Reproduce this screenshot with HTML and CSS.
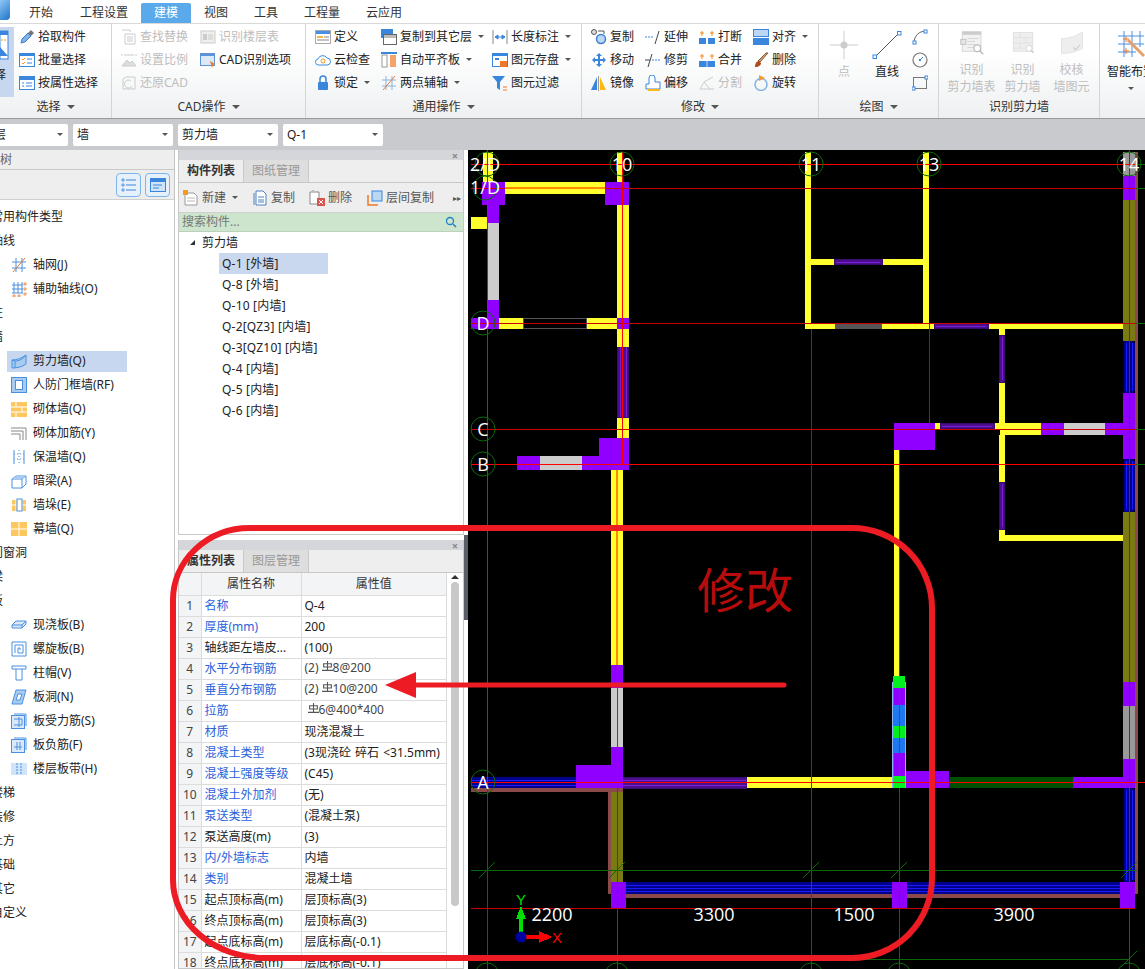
FILE: index.html
```html
<!DOCTYPE html>
<html lang="zh">
<head>
<meta charset="utf-8">
<title>建模</title>
<link rel="stylesheet" href="styles.css">
</head>
<body>
<svg class="defs" width="0" height="0">
  <defs>
    <symbol id="i-sel" viewBox="0 0 14 34"><rect x="0" y="1" width="8" height="28" fill="#fff" stroke="#3a86dc"/><rect x="0" y="1" width="8" height="4" fill="#3a86dc"/><path d="M1 10h6" stroke="#f59a23" stroke-dasharray="2 1"/><path d="M0 17l8 9H0z" fill="#3a86dc"/></symbol>
    <symbol id="i-pick" viewBox="0 0 16 16"><path d="M2 14l1-4 6-6 3 3-6 6z" fill="#7fb2e8" stroke="#3a7fd0"/><path d="M9 4l3-3 3 3-3 3z" fill="#777"/></symbol>
    <symbol id="i-batch" viewBox="0 0 16 16"><rect x=".5" y="1.500" width="15" height="13" fill="#fff" stroke="#3a86dc"/><rect y="1" width="16" height="3" fill="#3a86dc"/><path d="M3 7l1 1 2-2M3 11l1 1 2-2" stroke="#f59a23" fill="none"/><path d="M8 7h5M8 11h5" stroke="#3a86dc"/></symbol>
    <symbol id="i-attr" viewBox="0 0 16 16"><rect x=".5" y="1.500" width="15" height="13" fill="#fff" stroke="#3a86dc"/><rect y="1" width="16" height="4" fill="#3a86dc"/><path d="M3 8h2M3 11h2M7 8h6M7 11h6" stroke="#3a86dc"/></symbol>
    <symbol id="i-find" viewBox="0 0 16 16"><path d="M1 1h8v2M4 5h10v10H4z" fill="none" stroke="#ccc"/><path d="M6 8h6M6 10h6M6 12h6" stroke="#ccc"/></symbol>
    <symbol id="i-table" viewBox="0 0 16 16"><rect x="1" y="2" width="14" height="12" fill="#eee" stroke="#ccc"/><rect x="3" y="5" width="4" height="6" fill="#ccc"/><path d="M8 6h5M8 8h5M8 10h5" stroke="#ccc"/></symbol>
    <symbol id="i-scale" viewBox="0 0 16 16"><path d="M1 2v2M15 2v2M3 3h10M1 14l5-6 3 3 2-2 4 5z" stroke="#ccc" fill="#ddd"/></symbol>
    <symbol id="i-cad" viewBox="0 0 16 16"><rect x=".5" y="1.500" width="14" height="12" fill="#dbe8f8" stroke="#5b93d8"/><rect y="1" width="15" height="3" fill="#5b93d8"/><path d="M10 9l5 3-2 1-1 3z" fill="#f0782a"/></symbol>
    <symbol id="i-restore" viewBox="0 0 16 16"><path d="M2 14V4l3-2h9v12zM10 6a4 4 0 1 0 1 5" fill="none" stroke="#ccc"/></symbol>
    <symbol id="i-def" viewBox="0 0 16 16"><rect x=".5" y="1.500" width="15" height="13" fill="#fff" stroke="#aaa"/><rect x="1" y="2" width="14" height="3" fill="#4a90e2"/><rect x="2" y="7" width="6" height="2" fill="#f5b642"/><path d="M9 8h5M2 11h12" stroke="#888"/></symbol>
    <symbol id="i-cloud" viewBox="0 0 16 16"><path d="M4 13a3 3 0 0 1-1-6 5 5 0 0 1 9-1 3.500 3.500 0 0 1 0 7z" fill="#fff" stroke="#3a8ee0"/><circle cx="8" cy="9" r="2" fill="none" stroke="#f59a23"/></symbol>
    <symbol id="i-lock" viewBox="0 0 16 16"><rect x="3" y="7" width="10" height="8" rx="1" fill="#3a86dc"/><path d="M5 7V4a3 3 0 0 1 6 0v3" fill="none" stroke="#3a86dc" stroke-width="1.500"/></symbol>
    <symbol id="i-copyf" viewBox="0 0 16 16"><rect y="0" width="12" height="9" fill="#3a86dc"/><rect x="2.500" y="5.500" width="13" height="10" fill="#fff" stroke="#666"/><rect x="3" y="6" width="12" height="3" fill="#bbb"/></symbol>
    <symbol id="i-align" viewBox="0 0 16 16"><path d="M0 1h16" stroke="#3a86dc" stroke-width="2"/><rect x="1" y="3" width="5" height="12" fill="#fff" stroke="#999"/><rect x="9" y="3" width="6" height="12" fill="#f6a26b"/></symbol>
    <symbol id="i-axis" viewBox="0 0 16 16"><path d="M1 5h14M1 11h14M5 1v14M11 1v14" stroke="#8ab4e0"/><path d="M2 15L14 1" stroke="#f0782a"/></symbol>
    <symbol id="i-dim" viewBox="0 0 16 16"><path d="M1 1v14M15 1v14" stroke="#888"/><path d="M3 8h10M3 8l3-2v4zM13 8l-3-2v4z" stroke="#3a86dc" fill="#3a86dc"/></symbol>
    <symbol id="i-save" viewBox="0 0 16 16"><rect x=".5" y="1.500" width="15" height="13" fill="#fff" stroke="#3a86dc"/><rect y="1" width="16" height="3" fill="#3a86dc"/><rect x="3" y="6" width="4" height="2" fill="#3a86dc"/><rect x="8" y="9" width="7" height="6" fill="#f0782a"/></symbol>
    <symbol id="i-filter" viewBox="0 0 16 16"><path d="M0 1h13L8 7v8L5 13V7z" fill="#3a86dc"/><path d="M11 12h4M11 15h4" stroke="#f0782a"/></symbol>
    <symbol id="i-copy" viewBox="0 0 16 16"><circle cx="3" cy="3" r="2.500" fill="#ddd" stroke="#555"/><circle cx="10" cy="10" r="4.500" fill="#bcd7f4" stroke="#3a7fd0" stroke-width="1.500"/><path d="M7 2h6v3" stroke="#555" fill="none"/></symbol>
    <symbol id="i-extend" viewBox="0 0 16 16"><path d="M0 8h9" stroke="#3a86dc" stroke-dasharray="2 1"/><path d="M10 15L14 2" stroke="#444"/></symbol>
    <symbol id="i-break" viewBox="0 0 16 16"><rect y="9" width="7" height="6" fill="#3a86dc"/><rect x="9" y="9" width="7" height="6" fill="#3a86dc"/><path d="M3 2v5M1 4h4M13 2v5M11 4h4" stroke="#f08a1e"/></symbol>
    <symbol id="i-align2" viewBox="0 0 16 16"><rect x=".5" y=".5" width="15" height="7" fill="#bcd7f4" stroke="#3a86dc"/><rect y="9" width="16" height="7" fill="#3a86dc"/></symbol>
    <symbol id="i-move" viewBox="0 0 16 16"><path d="M8 1l3 3H9v3h3V5l3 3-3 3V9H9v3h2l-3 3-3-3h2V9H4v2L1 8l3-3v2h3V4H5z" fill="#3a86dc"/></symbol>
    <symbol id="i-trim" viewBox="0 0 16 16"><path d="M7 8h9" stroke="#3a86dc" stroke-dasharray="2 1"/><path d="M0 8h5" stroke="#444"/><path d="M3 15L7 2" stroke="#444"/></symbol>
    <symbol id="i-merge" viewBox="0 0 16 16"><rect y="9" width="16" height="6" fill="#3a86dc"/><path d="M8 9v6" stroke="#bcd7f4"/><path d="M3 2v5M1 4h4M13 2v5M11 4h4" stroke="#f08a1e"/></symbol>
    <symbol id="i-del" viewBox="0 0 16 16"><path d="M15 1L7 10l-2-1 8-8z" fill="#c9a27a" stroke="#8a5a2b"/><path d="M2 15c0-4 2-6 4-6l2 2c0 2-2 4-6 4z" fill="#b04a1e"/></symbol>
    <symbol id="i-mirror" viewBox="0 0 16 16"><path d="M6 2v13H0z" fill="#3a86dc"/><path d="M9 2v13h6z" fill="#fdb813"/><path d="M7.500 1v15" stroke="#999"/></symbol>
    <symbol id="i-offset" viewBox="0 0 16 16"><path d="M1 14V9h3V3a2 2 0 0 1 6 0v4h5v7z" fill="#fff" stroke="#3a86dc"/><path d="M3 15h12" stroke="#fdb813" stroke-width="2"/></symbol>
    <symbol id="i-split" viewBox="0 0 16 16"><path d="M1 14h14M1 14l4-7 9-5M5 7l6 7" stroke="#ccc" fill="none"/></symbol>
    <symbol id="i-rotate" viewBox="0 0 16 16"><circle cx="8" cy="9.500" r="6" fill="none" stroke="#7fb2e8" stroke-width="1.500"/><path d="M6 0l6 3-6 3z" fill="#f59a23"/></symbol>
    <symbol id="i-point" viewBox="0 0 30 30"><path d="M15 1v28M1 15h28" stroke="#ccc"/><circle cx="15" cy="15" r="3.500" fill="#ccc"/></symbol>
    <symbol id="i-line" viewBox="0 0 30 30"><path d="M3 27L27 3" stroke="#555"/><rect x="1" y="25" width="3.500" height="3.500" fill="#fff" stroke="#3a86dc"/><rect x="25.500" y="1.500" width="3.500" height="3.500" fill="#fff" stroke="#3a86dc"/></symbol>
    <symbol id="i-arc" viewBox="0 0 16 16"><path d="M2 14C2 7 7 2 14 2" fill="none" stroke="#666"/><rect x="1" y="12" width="3" height="3" fill="#fff" stroke="#3a86dc"/><rect x="12" y="1" width="3" height="3" fill="#fff" stroke="#3a86dc"/></symbol>
    <symbol id="i-circle" viewBox="0 0 16 16"><circle cx="8" cy="8" r="7" fill="none" stroke="#777" stroke-width="1.200"/><path d="M8 8l3-3" stroke="#3a86dc"/><rect x="7" y="7" width="2" height="2" fill="#3a86dc"/></symbol>
    <symbol id="i-rect" viewBox="0 0 16 16"><rect x="1.500" y="2.500" width="13" height="11" fill="none" stroke="#777"/><rect x="0" y="12" width="3" height="3" fill="#fff" stroke="#3a86dc"/><rect x="13" y="1" width="3" height="3" fill="#fff" stroke="#3a86dc"/></symbol>
    <symbol id="i-rtable" viewBox="0 0 32 32"><rect x="3" y="1" width="25" height="26" fill="#f2f2f2" stroke="#ccc"/><rect x="3" y="1" width="25" height="4" fill="#ccc"/><rect x="1" y="11" width="7" height="7" fill="#e4e4e4" stroke="#bbb"/><path d="M10 10h15M10 14h10M10 18h10M10 22h12" stroke="#ccc"/><circle cx="23" cy="23" r="4.500" fill="#fff" stroke="#bbb" stroke-width="1.500"/><path d="M26 26l5 5" stroke="#bbb" stroke-width="2"/></symbol>
    <symbol id="i-rwall" viewBox="0 0 32 32"><rect x="3" y="2" width="26" height="25" fill="#eee" stroke="#ddd"/><path d="M3 9h26M3 16h26M3 23h26M12 2v7M20 9v7M12 16v7" stroke="#ddd"/><circle cx="24" cy="23" r="4" fill="#fff" stroke="#ccc"/><path d="M27 26l3 3" stroke="#ccc" stroke-width="2"/></symbol>
    <symbol id="i-rcheck" viewBox="0 0 32 32"><path d="M2 10C12 10 22 7 30 1v22c-8 5-18 7-28 7z" fill="#eee" stroke="#ddd"/><path d="M18 22l3 3 6-7" stroke="#ccc" fill="none" stroke-width="1.500"/></symbol>
    <symbol id="i-smart" viewBox="0 0 30 30"><path d="M2 6h26M2 14h26M2 22h18M8 1v26M16 1v26M24 1v16" stroke="#4a90e2"/><path d="M12 10l16 16" stroke="#e8a06a" stroke-width="3"/><path d="M10 6v6M7 9h6M18 18v-0M10 18v6M7 21h6" stroke="#f0782a"/></symbol>
    <symbol id="t-list" viewBox="0 0 16 16"><path d="M1 2h2v2H1zM1 7h2v2H1zM1 12h2v2H1z" fill="none" stroke="#3a86dc" stroke-width=".8"/><path d="M5 3h10M5 8h10M5 13h10" stroke="#3a86dc"/></symbol>
    <symbol id="t-win" viewBox="0 0 16 16"><rect x=".5" y="1.500" width="15" height="13" fill="#cfe3f9" stroke="#3a86dc"/><rect y="1" width="16" height="4" fill="#3a86dc"/><path d="M3 8h9M3 11h6" stroke="#3a86dc"/></symbol>
    <symbol id="n-grid" viewBox="0 0 16 16"><path d="M1 5h14M1 11h14M5 1v14M11 1v14" stroke="#4a90e2"/><path d="M2 15L14 1" stroke="#f0782a"/></symbol>
    <symbol id="n-aux" viewBox="0 0 16 16"><path d="M1 4h11M1 8h11M1 12h11M3 1v11M7 1v11M11 1v11" stroke="#4a90e2"/><path d="M13 2h2v2h-2zM13 7h2v2h-2zM13 12h2v2h-2zM2 14h2v2H2zM7 14h2v2H7z" fill="none" stroke="#f0782a" stroke-width=".8"/></symbol>
    <symbol id="n-shear" viewBox="0 0 16 16"><path d="M1 7c5 0 10-2 14-5v9c-4 3-9 4-14 4z" fill="#a9cbf0" stroke="#4a90e2"/><path d="M1 7l3 1v7M4 8c4 0 8-2 11-6" fill="none" stroke="#4a90e2"/></symbol>
    <symbol id="n-door" viewBox="0 0 16 16"><rect x=".5" y=".5" width="15" height="15" fill="#a9cbf0" stroke="#4a90e2"/><rect x="4.500" y="3.500" width="7" height="9" fill="#fff" stroke="#4a90e2"/></symbol>
    <symbol id="n-brick" viewBox="0 0 16 16"><rect width="16" height="15" y="1" fill="#fdc75f"/><path d="M0 6h16M0 11h16M5 1v5M11 6v5M5 11v5" stroke="#fff"/></symbol>
    <symbol id="n-rebar" viewBox="0 0 16 16"><path d="M0 3h15v12M0 6h12v9M0 9h9v6" fill="none" stroke="#888"/></symbol>
    <symbol id="n-insul" viewBox="0 0 16 16"><path d="M3 1v14M13 1v14" stroke="#4a90e2"/><path d="M8 1v14M3 5h10M3 10h10" stroke="#4a90e2" stroke-dasharray="1 2"/></symbol>
    <symbol id="n-beam" viewBox="0 0 16 16"><path d="M1 6l4-3h10v8l-4 4H1z" fill="#fff" stroke="#4a90e2"/><path d="M1 6h10v9M11 6l4-3" fill="none" stroke="#4a90e2"/><path d="M1 6l4-3h10l-4 3z" fill="#a9cbf0"/></symbol>
    <symbol id="n-pier" viewBox="0 0 16 16"><rect x="1" y="3" width="14" height="11" fill="#fdc75f"/><path d="M1 8h14M5 3v11M11 3v11" stroke="#fff"/><rect x="6" y="2" width="5" height="12" fill="#fff" stroke="#4a90e2"/></symbol>
    <symbol id="n-curtain" viewBox="0 0 16 16"><rect y="1" width="16" height="14" fill="#fdc75f"/><path d="M8 1v14M0 8h16" stroke="#fff"/></symbol>
    <symbol id="n-slab" viewBox="0 0 16 16"><path d="M1 8l4-4h10v3l-4 4H1z" fill="#dbe8f8" stroke="#4a90e2"/><path d="M1 8h10l4-4M11 8v3" fill="none" stroke="#4a90e2"/></symbol>
    <symbol id="n-spiral" viewBox="0 0 16 16"><path d="M1 1h14v14H1zM4 12V4h8v8H7V7h2v2" fill="none" stroke="#4a90e2"/></symbol>
    <symbol id="n-cap" viewBox="0 0 16 16"><path d="M1 1h14v3H1zM5 4v11h6V4" fill="#fff" stroke="#4a90e2"/></symbol>
    <symbol id="n-hole" viewBox="0 0 16 16"><path d="M5 1h10l-4 14H1z" fill="#a9cbf0" stroke="#4a90e2"/><path d="M7 5h4l-2 6H5z" fill="#fff" stroke="#4a90e2"/></symbol>
    <symbol id="n-main" viewBox="0 0 16 16"><path d="M3 1h12v12" fill="none" stroke="#4a90e2"/><rect x=".5" y="2.500" width="13" height="13" fill="#dbe8f8" stroke="#4a90e2"/><path d="M3 6h8v6H3M8 4v10" fill="none" stroke="#4a90e2"/></symbol>
    <symbol id="n-neg" viewBox="0 0 16 16"><path d="M3 1h12v12" fill="none" stroke="#4a90e2"/><rect x=".5" y="2.500" width="13" height="13" fill="#dbe8f8" stroke="#4a90e2"/><path d="M3 10h8M6 5v8M9 5v8" fill="none" stroke="#4a90e2"/></symbol>
    <symbol id="n-strip" viewBox="0 0 16 16"><rect y="2" width="16" height="12" fill="#cfe3f9"/><path d="M6 2v12M10 2v12" stroke="#4a90e2" stroke-dasharray="2 1"/></symbol>
    <symbol id="b-new" viewBox="0 0 16 16"><path d="M2 3h9l3 3v9H2z" fill="#fff" stroke="#999"/><path d="M4 8h8M4 11h8" stroke="#bbb"/><rect width="5" height="5" fill="#f59a23"/></symbol>
    <symbol id="b-copy" viewBox="0 0 16 16"><path d="M4 1h7l3 3v11H4z" fill="#fff" stroke="#4a80c0"/><path d="M2 3v12" stroke="#4a80c0"/><path d="M6 7h6M6 10h6M6 12h6" stroke="#4a80c0"/></symbol>
    <symbol id="b-del" viewBox="0 0 16 16"><path d="M1 2h9v12H1z" fill="#fff" stroke="#888"/><path d="M4 0v1" stroke="#888"/><rect x="8" y="8" width="8" height="8" fill="#d9534f"/><path d="M10 10l4 4M14 10l-4 4" stroke="#fff"/></symbol>
    <symbol id="b-layer" viewBox="0 0 16 16"><path d="M1 5v10h10" fill="none" stroke="#f0782a" stroke-width="1.500"/><rect x="5" y="1" width="10" height="10" fill="#bcd7f4" stroke="#3a86dc"/></symbol>
    <symbol id="rebar" viewBox="0 0 10 10"><path d="M5 0v9M1.500 2.500h7v3h-7zM0 8.500h10" fill="none" stroke="#555"/></symbol>
  </defs>
</svg>

<div class="app">
  <header class="tabs">
    <div class="logo"></div>
    <nav class="tablist">
      <span class="tab t1">开始</span>
      <span class="tab t2">工程设置</span>
      <span class="tab tab-on">建模</span>
      <span class="tab t3">视图</span>
      <span class="tab t4">工具</span>
      <span class="tab t5">工程量</span>
      <span class="tab t6">云应用</span>
    </nav>
  </header>

  <section class="ribbon">
    <div class="grp g1">
      <div class="body">
        <div class="bigsel"><svg class="selic"><use href="#i-sel"/></svg><span>择</span></div>
        <div class="col lower">
          <div class="it"><svg class="ic"><use href="#i-pick"/></svg>拾取构件</div>
          <div class="it"><svg class="ic"><use href="#i-batch"/></svg>批量选择</div>
          <div class="it"><svg class="ic"><use href="#i-attr"/></svg>按属性选择</div>
        </div>
      </div>
      <div class="lab">选择<i class="caret"></i></div>
    </div>
    <div class="grp g2">
      <div class="body pad">
        <div class="col w79">
          <div class="it off"><svg class="ic"><use href="#i-find"/></svg>查找替换</div>
          <div class="it off"><svg class="ic"><use href="#i-scale"/></svg>设置比例</div>
          <div class="it off"><svg class="ic"><use href="#i-restore"/></svg>还原CAD</div>
        </div>
        <div class="col">
          <div class="it off"><svg class="ic"><use href="#i-table"/></svg>识别楼层表</div>
          <div class="it"><svg class="ic"><use href="#i-cad"/></svg>CAD识别选项</div>
        </div>
      </div>
      <div class="lab">CAD操作<i class="caret"></i></div>
    </div>
    <div class="grp g3">
      <div class="body pad">
        <div class="col w66">
          <div class="it"><svg class="ic"><use href="#i-def"/></svg>定义</div>
          <div class="it"><svg class="ic"><use href="#i-cloud"/></svg>云检查</div>
          <div class="it"><svg class="ic"><use href="#i-lock"/></svg>锁定<i class="drop"></i></div>
        </div>
        <div class="col w111">
          <div class="it"><svg class="ic"><use href="#i-copyf"/></svg>复制到其它层<i class="drop"></i></div>
          <div class="it"><svg class="ic"><use href="#i-align"/></svg>自动平齐板<i class="drop"></i></div>
          <div class="it"><svg class="ic"><use href="#i-axis"/></svg>两点辅轴<i class="drop"></i></div>
        </div>
        <div class="col">
          <div class="it"><svg class="ic"><use href="#i-dim"/></svg>长度标注<i class="drop"></i></div>
          <div class="it"><svg class="ic"><use href="#i-save"/></svg>图元存盘<i class="drop"></i></div>
          <div class="it"><svg class="ic"><use href="#i-filter"/></svg>图元过滤</div>
        </div>
      </div>
      <div class="lab">通用操作<i class="caret"></i></div>
    </div>
    <div class="grp g4">
      <div class="body pad">
        <div class="col w54">
          <div class="it"><svg class="ic"><use href="#i-copy"/></svg>复制</div>
          <div class="it"><svg class="ic"><use href="#i-move"/></svg>移动</div>
          <div class="it"><svg class="ic"><use href="#i-mirror"/></svg>镜像</div>
        </div>
        <div class="col w54">
          <div class="it"><svg class="ic"><use href="#i-extend"/></svg>延伸</div>
          <div class="it"><svg class="ic"><use href="#i-trim"/></svg>修剪</div>
          <div class="it"><svg class="ic"><use href="#i-offset"/></svg>偏移</div>
        </div>
        <div class="col w54">
          <div class="it"><svg class="ic"><use href="#i-break"/></svg>打断</div>
          <div class="it"><svg class="ic"><use href="#i-merge"/></svg>合并</div>
          <div class="it off"><svg class="ic"><use href="#i-split"/></svg>分割</div>
        </div>
        <div class="col">
          <div class="it"><svg class="ic"><use href="#i-align2"/></svg>对齐<i class="drop"></i></div>
          <div class="it"><svg class="ic"><use href="#i-del"/></svg>删除</div>
          <div class="it"><svg class="ic"><use href="#i-rotate"/></svg>旋转</div>
        </div>
      </div>
      <div class="lab">修改<i class="caret"></i></div>
    </div>
    <div class="grp g5">
      <div class="body draw">
        <div class="big w46 off"><svg class="bi30"><use href="#i-point"/></svg><span>点</span></div>
        <div class="big w40"><svg class="bi30"><use href="#i-line"/></svg><span>直线</span></div>
        <div class="col mini">
          <div class="it"><svg class="ic"><use href="#i-arc"/></svg></div>
          <div class="it"><svg class="ic"><use href="#i-circle"/></svg></div>
          <div class="it"><svg class="ic"><use href="#i-rect"/></svg></div>
        </div>
      </div>
      <div class="lab">绘图<i class="caret"></i></div>
    </div>
    <div class="grp g6">
      <div class="body rec">
        <div class="big w51 off"><svg class="bi32"><use href="#i-rtable"/></svg><span>识别<br>剪力墙表</span></div>
        <div class="big w51 off"><svg class="bi32"><use href="#i-rwall"/></svg><span>识别<br>剪力墙</span></div>
        <div class="big w47 off"><svg class="bi32"><use href="#i-rcheck"/></svg><span>校核<br>墙图元</span></div>
      </div>
      <div class="lab">识别剪力墙</div>
    </div>
    <div class="grp g7">
      <div class="body smart">
        <div class="big"><svg class="bi30"><use href="#i-smart"/></svg><span>智能布置</span><i class="drop"></i></div>
      </div>
    </div>
  </section>

  <section class="selbar">
    <div class="sel s0"><span>层</span><i class="drop"></i></div>
    <div class="sel s1"><span>墙</span><i class="drop"></i></div>
    <div class="sel s2"><span>剪力墙</span><i class="drop"></i></div>
    <div class="sel s2"><span>Q-1</span><i class="drop"></i></div>
  </section>

  <main class="main">
    <aside class="left">
      <div class="lhead"><span>树</span></div>
      <div class="ltools">
        <span class="tbtn"><svg class="ic"><use href="#t-list"/></svg></span>
        <span class="tbtn"><svg class="ic"><use href="#t-win"/></svg></span>
      </div>
      <ul class="tree">
        <li>常用构件类型</li>
        <li>轴线</li>
        <li class="ch"><svg class="ic"><use href="#n-grid"/></svg>轴网(J)</li>
        <li class="ch"><svg class="ic"><use href="#n-aux"/></svg>辅助轴线(O)</li>
        <li>柱</li>
        <li>墙</li>
        <li class="ch on"><svg class="ic"><use href="#n-shear"/></svg>剪力墙(Q)</li>
        <li class="ch"><svg class="ic"><use href="#n-door"/></svg>人防门框墙(RF)</li>
        <li class="ch"><svg class="ic"><use href="#n-brick"/></svg>砌体墙(Q)</li>
        <li class="ch"><svg class="ic"><use href="#n-rebar"/></svg>砌体加筋(Y)</li>
        <li class="ch"><svg class="ic"><use href="#n-insul"/></svg>保温墙(Q)</li>
        <li class="ch"><svg class="ic"><use href="#n-beam"/></svg>暗梁(A)</li>
        <li class="ch"><svg class="ic"><use href="#n-pier"/></svg>墙垛(E)</li>
        <li class="ch"><svg class="ic"><use href="#n-curtain"/></svg>幕墙(Q)</li>
        <li>门窗洞</li>
        <li>梁</li>
        <li>板</li>
        <li class="ch"><svg class="ic"><use href="#n-slab"/></svg>现浇板(B)</li>
        <li class="ch"><svg class="ic"><use href="#n-spiral"/></svg>螺旋板(B)</li>
        <li class="ch"><svg class="ic"><use href="#n-cap"/></svg>柱帽(V)</li>
        <li class="ch"><svg class="ic"><use href="#n-hole"/></svg>板洞(N)</li>
        <li class="ch"><svg class="ic"><use href="#n-main"/></svg>板受力筋(S)</li>
        <li class="ch"><svg class="ic"><use href="#n-neg"/></svg>板负筋(F)</li>
        <li class="ch"><svg class="ic"><use href="#n-strip"/></svg>楼层板带(H)</li>
        <li>楼梯</li>
        <li>装修</li>
        <li>土方</li>
        <li>基础</li>
        <li>其它</li>
        <li>自定义</li>
      </ul>
    </aside>

    <div class="mid">
      <section class="panel p-top">
        <div class="strip"><span class="x">×</span></div>
        <div class="ptabs"><span class="pt pt-on">构件列表</span><span class="pt">图纸管理</span></div>
        <div class="ptools">
          <span class="pb pb1"><svg class="ic"><use href="#b-new"/></svg>新建<i class="drop"></i></span>
          <span class="pb pb2"><svg class="ic"><use href="#b-copy"/></svg>复制</span>
          <span class="pb pb3"><svg class="ic"><use href="#b-del"/></svg>删除</span>
          <span class="pb"><svg class="ic"><use href="#b-layer"/></svg>层间复制</span>
          <span class="more">▸▸</span>
        </div>
        <div class="search"><span>搜索构件...</span>
          <svg class="mag" viewBox="0 0 12 12"><circle cx="5" cy="5" r="3.500" fill="none" stroke="#1f7fc4" stroke-width="1.300"/><path d="M8 8l3 3" stroke="#1f7fc4" stroke-width="1.500"/></svg>
        </div>
        <div class="clist">
          <div class="chead"><i class="tri"></i>剪力墙</div>
          <div class="cit cit-on">Q-1 [外墙]</div>
          <div class="cit">Q-8 [外墙]</div>
          <div class="cit">Q-10 [内墙]</div>
          <div class="cit">Q-2[QZ3] [内墙]</div>
          <div class="cit">Q-3[QZ10] [内墙]</div>
          <div class="cit">Q-4 [内墙]</div>
          <div class="cit">Q-5 [内墙]</div>
          <div class="cit">Q-6 [内墙]</div>
        </div>
      </section>
      <section class="panel p-bot">
        <div class="strip"><span class="x">×</span></div>
        <div class="ptabs"><span class="pt pt-on">属性列表</span><span class="pt">图层管理</span></div>
        <div class="tblwrap">
          <table class="props">
            <thead><tr><th class="n"></th><th class="k">属性名称</th><th class="v">属性值</th></tr></thead>
            <tbody>
              <tr><td class="n">1</td><td class="k lk">名称</td><td>Q-4</td></tr>
              <tr><td class="n">2</td><td class="k lk">厚度(mm)</td><td>200</td></tr>
              <tr><td class="n">3</td><td class="k">轴线距左墙皮...</td><td>(100)</td></tr>
              <tr><td class="n">4</td><td class="k lk">水平分布钢筋</td><td class="g">(2)<svg class="rb"><use href="#rebar"/></svg>8@200</td></tr>
              <tr><td class="n">5</td><td class="k lk">垂直分布钢筋</td><td class="g">(2)<svg class="rb"><use href="#rebar"/></svg>10@200</td></tr>
              <tr><td class="n">6</td><td class="k lk">拉筋</td><td class="g"><svg class="rb rb0"><use href="#rebar"/></svg>6@400*400</td></tr>
              <tr><td class="n">7</td><td class="k lk">材质</td><td>现浇混凝土</td></tr>
              <tr><td class="n">8</td><td class="k lk">混凝土类型</td><td class="tight">(3现浇砼 碎石 &lt;31.5mm)</td></tr>
              <tr><td class="n">9</td><td class="k lk">混凝土强度等级</td><td>(C45)</td></tr>
              <tr><td class="n">10</td><td class="k lk">混凝土外加剂</td><td>(无)</td></tr>
              <tr><td class="n">11</td><td class="k lk">泵送类型</td><td>(混凝土泵)</td></tr>
              <tr><td class="n">12</td><td class="k">泵送高度(m)</td><td>(3)</td></tr>
              <tr><td class="n">13</td><td class="k lk">内/外墙标志</td><td>内墙</td></tr>
              <tr><td class="n">14</td><td class="k lk">类别</td><td>混凝土墙</td></tr>
              <tr><td class="n">15</td><td class="k">起点顶标高(m)</td><td>层顶标高(3)</td></tr>
              <tr><td class="n">16</td><td class="k">终点顶标高(m)</td><td>层顶标高(3)</td></tr>
              <tr><td class="n">17</td><td class="k">起点底标高(m)</td><td>层底标高(-0.1)</td></tr>
              <tr><td class="n">18</td><td class="k">终点底标高(m)</td><td>层底标高(-0.1)</td></tr>
            </tbody>
          </table>
          <div class="sb"><i class="sb-up"></i><i class="sb-th"></i></div>
        </div>
      </section>
    </div>

    <div class="split"><i class="split-bar"></i></div>

    <svg class="cad" viewBox="468 150 677 819">
      <g class="yw">
        <rect x="483" y="152" width="10" height="30"/><rect x="505" y="182" width="100" height="12"/>
        <rect x="471" y="217" width="17" height="12"/><rect x="499" y="318" width="24" height="11"/>
        <rect x="587" y="318" width="30" height="11"/><rect x="617" y="152" width="6" height="30"/>
        <rect x="617" y="205" width="12" height="113"/><rect x="617" y="329" width="12" height="18"/>
        <rect x="617" y="417" width="12" height="21"/><rect x="611" y="470" width="12" height="195"/>
        <rect x="805" y="152" width="6" height="177"/><rect x="923" y="152" width="6" height="171"/>
        <rect x="811" y="259" width="112" height="6"/><rect x="805" y="323" width="324" height="6"/>
        <rect x="999" y="329" width="6" height="94"/><rect x="935" y="423" width="59" height="6"/>
        <rect x="994" y="423" width="47" height="6"/><rect x="1000" y="430" width="41" height="5"/>
        <rect x="999" y="435" width="6" height="106"/><rect x="999" y="535" width="130" height="6"/>
        <rect x="894" y="450" width="5" height="226"/><rect x="746" y="777" width="146" height="11"/>
      </g>
      <g class="gw">
        <rect x="488" y="223" width="11" height="77"/><rect x="540" y="456" width="42" height="14"/>
        <rect x="611" y="688" width="12" height="59"/><rect x="1064" y="423" width="41" height="12"/>
      </g>
      <rect class="gw2" x="1123" y="152" width="12" height="24"/>
      <rect class="gw2" x="1123" y="706" width="12" height="53"/>
      <g class="ol">
        <rect x="1123" y="200" width="12" height="141"/><rect x="1123" y="512" width="12" height="170"/>
        <rect x="611" y="792" width="12" height="90"/>
      </g>
      <g class="br">
        <rect x="1135" y="152" width="3" height="742"/><rect x="471" y="788" width="152" height="4"/>
        <rect x="608" y="792" width="3" height="102"/><rect x="611" y="894" width="512" height="4"/>
      </g>
      <g class="pu">
        <rect x="482" y="182" width="23" height="23"/><rect x="488" y="205" width="11" height="18"/>
        <rect x="488" y="300" width="11" height="18"/><rect x="471" y="318" width="28" height="11"/>
        <rect x="605" y="182" width="24" height="23"/><rect x="617" y="318" width="12" height="11"/>
        <rect x="599" y="438" width="30" height="32"/><rect x="517" y="456" width="23" height="14"/>
        <rect x="582" y="456" width="17" height="14"/><rect x="611" y="665" width="12" height="23"/>
        <rect x="611" y="747" width="12" height="18"/><rect x="576" y="765" width="47" height="23"/>
        <rect x="894" y="423" width="41" height="27"/><rect x="1041" y="423" width="23" height="12"/>
        <rect x="1105" y="423" width="18" height="12"/><rect x="1123" y="176" width="12" height="24"/>
        <rect x="1123" y="393" width="12" height="66"/><rect x="1123" y="682" width="12" height="24"/>
        <rect x="1123" y="759" width="12" height="29"/><rect x="1073" y="777" width="50" height="11"/>
        <rect x="905" y="771" width="44" height="17"/><rect x="611" y="882" width="15" height="26"/>
        <rect x="892" y="882" width="15" height="26"/><rect x="1120" y="882" width="15" height="26"/>
      </g>
      <rect class="dk" x="523.500" y="318.500" width="63" height="10"/>
      <rect class="dk2" x="835" y="323" width="47" height="6"/>
      <g class="dp">
        <rect x="617.500" y="347" width="11" height="70"/><rect x="834" y="259.500" width="48" height="5"/>
        <rect x="934" y="323.500" width="54" height="5"/><rect x="999.500" y="335" width="5" height="47"/>
        <rect x="940" y="423.500" width="54" height="5"/><rect x="999.500" y="482" width="5" height="47"/>
        <rect x="623" y="777" width="123" height="11"/>
      </g>
      <g class="dpl">
        <path d="M620 347v70M626 347v70M836 262h44M936 326h50M1002 337v43M942 426h50M1002 484v43M623 780h123M623 785h123"/>
      </g>
      <g class="bl">
        <rect x="1123.500" y="341" width="11" height="52" rx="2"/><rect x="1123.500" y="459" width="11" height="53" rx="2"/>
        <rect x="471" y="777" width="105" height="11"/><rect x="1123.500" y="788" width="11" height="94" rx="2"/>
        <rect x="626" y="882" width="266" height="12"/><rect x="907" y="882" width="213" height="12"/>
      </g>
      <g class="bll">
        <path d="M471 780h105M471 785h105M626 885h266M626 888h266M626 891h266M907 885h213M907 888h213M907 891h213M1126 343v48M1129 343v48M1132 343v48M1126 461v49M1129 461v49M1132 461v49M1126 790v90M1129 790v90M1132 790v90"/>
      </g>
      <rect class="dg" x="949" y="777" width="124" height="11"/>
      <g class="grn">
        <path d="M487 782V969M617 788V969M811 782V969M899 788V969M1129 788V969M471 870H1137M811 959H1129M1135 782H1145M1135 164H1145M1135 188H1145M1135 323H1145M1135 429H1145M1135 464H1145"/>
        <path d="M479 878L495 862M609 878L625 862M803 878L819 862M891 878L907 862M1121 878L1137 862M1121 967L1137 951"/>
      </g>
      <g class="rl">
        <path d="M471 164H1135M471 464H1135M471 782H1145M487 150V782"/>
        <path d="M622 152V465M617 465V782"/>
      </g>
      <g class="drl">
        <path d="M471 188H1135M471 323H1135M471 429H1135M811 329V782M929 323V429M899 450V682M1129 150V782"/>
        <path d="M471 908H1135"/>
      </g>
      <path class="orl" d="M505 188H605M617 470V665"/>
      <g>
        <rect class="sel-o" x="892.500" y="682.500" width="13" height="105"/>
        <rect class="pu" x="894" y="688" width="11" height="17"/>
        <rect class="sb1" x="894" y="705" width="11" height="21"/>
        <rect class="sb1" x="894" y="738" width="11" height="15"/>
        <rect class="pu" x="894" y="753" width="11" height="23"/>
        <rect class="gn" x="893" y="676" width="12" height="12"/>
        <rect class="gn" x="893" y="726" width="12" height="12"/>
        <rect class="gn" x="893" y="776" width="12" height="12"/>
        <path class="selred" d="M899 688V776M892 782H905"/>
      </g>
      <g class="circ">
        <circle cx="487" cy="164" r="12"/><circle cx="622" cy="164" r="12"/><circle cx="811" cy="164" r="12"/>
        <circle cx="929" cy="164" r="12"/><circle cx="1129" cy="164" r="12"/><circle cx="485" cy="188" r="12"/>
        <circle cx="483" cy="323" r="12"/><circle cx="483" cy="429" r="12"/><circle cx="483" cy="464" r="12"/>
        <circle cx="483" cy="782" r="12"/><circle cx="487" cy="975" r="12"/><circle cx="617" cy="975" r="12"/>
        <circle cx="811" cy="975" r="12"/><circle cx="899" cy="975" r="12"/><circle cx="1129" cy="975" r="12"/>
      </g>
      <g class="axl">
        <text x="485" y="171">2/D</text><text x="622" y="171">10</text><text x="811" y="171">11</text>
        <text x="929" y="171">13</text><text x="1129" y="171">14</text><text x="485" y="194">1/D</text>
        <text x="483" y="330">D</text><text x="483" y="436">C</text><text x="483" y="471">B</text>
        <text x="483" y="789">A</text>
        <text x="552" y="921">2200</text><text x="714" y="921">3300</text><text x="854" y="921">1500</text><text x="1014" y="921">3900</text>
      </g>
      <g>
        <path class="ax-g" d="M521 933V915"/><path class="ax-gf" d="M516 919L521 906L526 919Z"/>
        <text class="ax-yt" x="521" y="905">Y</text>
        <path class="ax-r" d="M526 937H543"/><path class="ax-rf" d="M539 931L552 937L539 943Z"/>
        <text class="ax-xt" x="557" y="943">X</text>
        <circle class="ax-b" cx="521" cy="937" r="5.500"/>
      </g>
    </svg>
  </main>

  <svg class="note" viewBox="0 0 1145 969">
    <path class="ring" d="M250 528H852A80 80 0 0 1 932 608V878A80 80 0 0 1 852 958H265A92 78 0 0 1 173 880V600A77 72 0 0 1 250 528Z"/>
    <path class="shaft" d="M412 685H784"/>
    <path class="head" d="M385 685L416 672V698Z"/>
    <text class="memo" x="745" y="608">修改</text>
  </svg>
</div>
</body>
</html>
```
FILE: styles.css
```css
* { box-sizing: border-box; margin: 0; padding: 0; }
html, body { width: 1145px; height: 969px; overflow: hidden; background: #fff; }
body { font-family: "Noto Sans", "Noto Sans CJK SC", sans-serif; font-size: 12px; color: #222; line-height: 1; }
.defs { position: absolute; }
.app { position: relative; width: 1145px; height: 969px; display: flex; flex-direction: column; overflow: hidden; }
i { display: inline-block; font-style: normal; }
ul { list-style: none; }

/* tabs */
.tabs { height: 23px; display: flex; background: #fff; flex: none; }
.logo { width: 10px; height: 20px; background: linear-gradient(135deg, #8fc6f5, #1d74c9); border-bottom-right-radius: 4px; }
.tablist { display: flex; align-items: flex-end; height: 23px; padding-left: 19px; }
.tab { height: 20px; display: flex; align-items: center; justify-content: center; padding-bottom: 1px; color: #333; }
.t1 { width: 24px; margin-right: 27px; }
.t2 { width: 48px; margin-right: 13px; }
.tab-on { width: 50px; margin-right: 13px; background: #5aa9ea; color: #fff; border-radius: 2px 2px 0 0; }
.t3 { width: 24px; margin-right: 26px; }
.t4 { width: 24px; margin-right: 26px; }
.t5 { width: 36px; margin-right: 26px; }
.t6 { width: 36px; }

/* ribbon */
.ribbon { height: 96px; flex: none; display: flex; border-top: 1px solid #d9d9d9; border-bottom: 1px solid #9a9a9a; background: linear-gradient(#fff 30%, #eef0f1); overflow: hidden; }
.grp { position: relative; flex: none; display: flex; flex-direction: column; border-right: 1px solid #d3d5d6; }
.g1 { width: 112px; } .g2 { width: 194px; } .g3 { width: 276px; } .g4 { width: 237px; }
.g5 { width: 120px; } .g6 { width: 161px; } .g7 { flex: 1; border-right: 0; }
.body { height: 71px; display: flex; flex: none; }
.pad { padding-left: 9px; padding-top: 1px; }
.lower { margin-top: 1px; }
.lab { height: 23px; display: flex; align-items: center; justify-content: center; gap: 6px; color: #333; }
.caret { width: 0; height: 0; border-left: 4px solid transparent; border-right: 4px solid transparent; border-top: 4px solid #555; }
.drop { width: 0; height: 0; margin-left: 6px; border-left: 3px solid transparent; border-right: 3px solid transparent; border-top: 3px solid #555; }
.col { display: flex; flex-direction: column; flex: none; }
.w79 { width: 79px; } .w66 { width: 66px; } .w111 { width: 111px; } .w54 { width: 54px; }
.it { height: 23px; display: flex; align-items: center; white-space: nowrap; }
.ic { width: 16px; height: 16px; flex: none; margin-right: 3px; }
.off { color: #bdbdbd; }
.bigsel { width: 14px; height: 70px; margin-top: 3px; margin-right: 5px; background: #c6d7ef; display: flex; flex-direction: column; align-items: flex-start; overflow: hidden; }
.selic { width: 14px; height: 34px; margin-top: 3px; margin-bottom: 5px; flex: none; }
.bigsel span { margin-left: -6px; }
.big { display: flex; flex-direction: column; align-items: center; flex: none; text-align: center; line-height: 17px; }
.bi30 { width: 30px; height: 30px; margin-bottom: 3px; }
.bi32 { width: 32px; height: 32px; margin-bottom: 6px; }
.draw { padding-top: 6px; padding-left: 2px; }
.w46 { width: 46px; } .w47 { width: 47px; } .w40 { width: 40px; } .w51 { width: 51px; }
.mini { margin-left: 5px; margin-top: -5px; }
.rec { padding-top: 7px; padding-left: 7px; color: #bbb; }
.smart { padding-top: 6px; padding-left: 1px; }
.smart .big { width: 60px; }
.smart .drop { margin: 7px 0 0; }

/* select bar */
.selbar { height: 31px; flex: none; display: flex; align-items: center; gap: 5px; background: #c8cacd; }
.sel { height: 22px; background: #fff; border-radius: 2px; display: flex; align-items: center; justify-content: space-between; padding: 0 5px 0 4px; }
.s0 { width: 69px; margin-left: -1px; padding-left: 0; }
.s0 span { margin-left: -5px; }
.s1 { width: 100px; }
.s2 { width: 100px; }

/* main */
.main { flex: 1; display: flex; min-height: 0; }
.left { width: 175px; flex: none; border-right: 1px solid #c4c4c4; display: flex; flex-direction: column; overflow: hidden; background: #fff; }
.lhead { height: 20px; flex: none; background: #eeeeee; border-bottom: 1px solid #c9c9c9; color: #666; display: flex; align-items: center; }
.ltools { height: 30px; flex: none; background: #eeeeee; border-bottom: 1px solid #d0d0d0; display: flex; justify-content: flex-end; align-items: center; gap: 4px; padding-right: 4px; }
.tbtn { width: 25px; height: 24px; display: flex; align-items: center; justify-content: center; background: #e6f1fc; border: 1px solid #7db6ef; border-radius: 4px; }
.tbtn .ic { margin: 0; }
.tree { margin-left: -9px; padding-top: 5px; width: 190px; }
.tree li { height: 24px; display: flex; align-items: center; white-space: nowrap; padding-left: 0; }
.tree .ch { margin-left: 16px; padding-left: 4px; width: 120px; }
.tree .ch .ic { margin-right: 6px; }
.tree .on { background: #c6d7ef; height: 21px; margin-top: 1.500px; margin-bottom: 1.500px; }

.mid { width: 286px; flex: none; margin-left: 3px; display: flex; flex-direction: column; }
.panel { display: flex; flex-direction: column; border: 1px solid #c8c8c8; border-top: 0; background: #fff; overflow: hidden; }
.p-top { height: 385px; flex: none; }
.p-bot { flex: 1; margin-top: 5px; min-height: 0; }
.strip { height: 10px; flex: none; background: #d4d6da; display: flex; justify-content: flex-end; align-items: center; padding-right: 5px; }
.x { color: #888; font-size: 11px; font-weight: 700; }
.ptabs { height: 23px; flex: none; display: flex; background: #eeeeee; border-bottom: 1px solid #c8c8c8; }
.pt { width: 65px; display: flex; align-items: center; justify-content: center; font-weight: 400; color: #999; background: #dedede; border-right: 1px solid #c8c8c8; }
.pt-on { color: #333; font-weight: 700; background: #eeeeee; }
.ptools { height: 30px; flex: none; display: flex; align-items: center; padding-left: 4px; background: #eeeeee; border-bottom: 1px solid #d0d0d0; color: #555; position: relative; }
.pb { display: flex; align-items: center; flex: none; }
.pb .ic { margin-right: 3px; }
.pb1 { width: 69px; } .pb2 { width: 57px; } .pb3 { width: 58px; }
.more { margin-left: auto; margin-right: 2px; font-size: 8px; color: #555; }
.search { height: 19px; flex: none; background: #cce5cc; border-bottom: 1px solid #bcd0bc; display: flex; align-items: center; justify-content: space-between; padding: 0 6px 0 3px; color: #777; }
.mag { width: 12px; height: 12px; }
.clist { padding: 0 0 0 9px; flex: 1; }
.chead { height: 21px; display: flex; align-items: center; padding-left: 2px; }
.tri { width: 0; height: 0; margin-right: 7px; border-left: 5px solid transparent; border-bottom: 5px solid #333; }
.cit { height: 21px; display: flex; align-items: center; padding-left: 3px; margin-left: 31px; width: 109px; white-space: nowrap; letter-spacing: .2px; }
.cit-on { background: #c9d8ef; }

.tblwrap { flex: 1; display: flex; min-height: 0; overflow: hidden; }
.props { width: 268px; flex: none; border-collapse: collapse; table-layout: fixed; height: 0; }
.props th { height: 22px; font-weight: 400; background: #f3f4f5; border: 1px solid #dcdcdc; border-top: 0; color: #333; }
.props td { height: 21px; border: 1px solid #dcdcdc; padding: 0 3px; white-space: nowrap; overflow: hidden; text-overflow: clip; }
.props .n { width: 22px; background: #f3f4f5; text-align: center; color: #444; font-size: 12px; padding: 0; border-left: 0; }
.props .k { width: 100px; }
.props .lk { color: #2a62dc; }
.props .g { color: #444; }
.props .tight { padding-right: 0; word-spacing: 1px; }
.rb { width: 11px; height: 11px; margin: 0 0 5px 3px; vertical-align: middle; }
.rb0 { margin-left: 3px; }
.sb { flex: 1; position: relative; display: flex; flex-direction: column; align-items: center; padding-top: 2px; }
.sb-up { width: 0; height: 0; border-left: 4px solid transparent; border-right: 4px solid transparent; border-bottom: 4px solid #333; margin-bottom: 3px; }
.sb-th { width: 8px; height: 324px; background: #c8c8c8; border-radius: 4px; }

.split { width: 4px; flex: none; background: #fff; padding-top: 385px; }
.split-bar { display: block; width: 4px; height: 85px; background: #5b6068; }

.cad { width: 677px; height: 819px; flex: none; background: #000; display: block; }
.cad rect { shape-rendering: crispEdges; }
.cad path { fill: none; stroke-width: 1; shape-rendering: crispEdges; }
.yw rect { fill: #ffff2e; }
.gw rect { fill: #cccccc; }
.gw2 { fill: #999999; }
.ol rect { fill: #7a7a12; }
.br rect { fill: #8a4a4a; }
.pu rect, rect.pu { fill: #8f00ff; }
.dk { fill: #000; stroke: #555; }
.dk2 { fill: #555; }
.dp rect { fill: #4a0e8f; stroke: #3a0a70; stroke-width: 1; }
.dpl path { stroke: #7a1fd0; }
.bl rect { fill: #00008b; }
.bll path { stroke: #1a1aff; }
.dg { fill: #004f00; }
.sel-o { fill: #1e78f0; stroke: #8ab4f0; stroke-width: 1.500; }
.sb1 { fill: #1e78f0; }
.gn { fill: #00f020; }
.grn path { stroke: #0a6a0a; }
.rl path { stroke: #ff0000; }
.cad .drl path { stroke: #cc0000; }
.orl { stroke: #ff8a00 !important; stroke-width: 2 !important; }
.cad .selred { stroke: #e01010; }
.circ circle { fill: none; stroke: #0a6a0a; stroke-width: 1; }
.axl text { fill: #fff; font-family: "Open Sans", sans-serif; font-size: 18px; text-anchor: middle; }
.cad .ax-g { stroke: #00e000; stroke-width: 4; }
.ax-gf { fill: #00e000 !important; stroke: none !important; }
.cad .ax-r { stroke: #ff0000; stroke-width: 4; }
.ax-rf { fill: #ff0000 !important; stroke: none !important; }
.ax-b { fill: #0000a0; }
.ax-yt { fill: #00e000; font-family: "Liberation Sans", sans-serif; font-size: 15px; text-anchor: middle; }
.ax-xt { fill: #ff0000; font-family: "Liberation Sans", sans-serif; font-size: 15px; text-anchor: middle; }

/* hand-drawn annotation over the screenshot */
.note { position: absolute; left: 0; top: 0; width: 1145px; height: 969px; pointer-events: none; }
.ring { fill: none; stroke: #ed1c24; stroke-width: 6; }
.shaft { stroke: #ed1c24; stroke-width: 5; stroke-linecap: round; }
.head { fill: #ed1c24; }
.memo { fill: #b80c0c; font-family: "Noto Sans CJK SC", sans-serif; font-size: 48px; font-weight: 400; text-anchor: middle; }
```
